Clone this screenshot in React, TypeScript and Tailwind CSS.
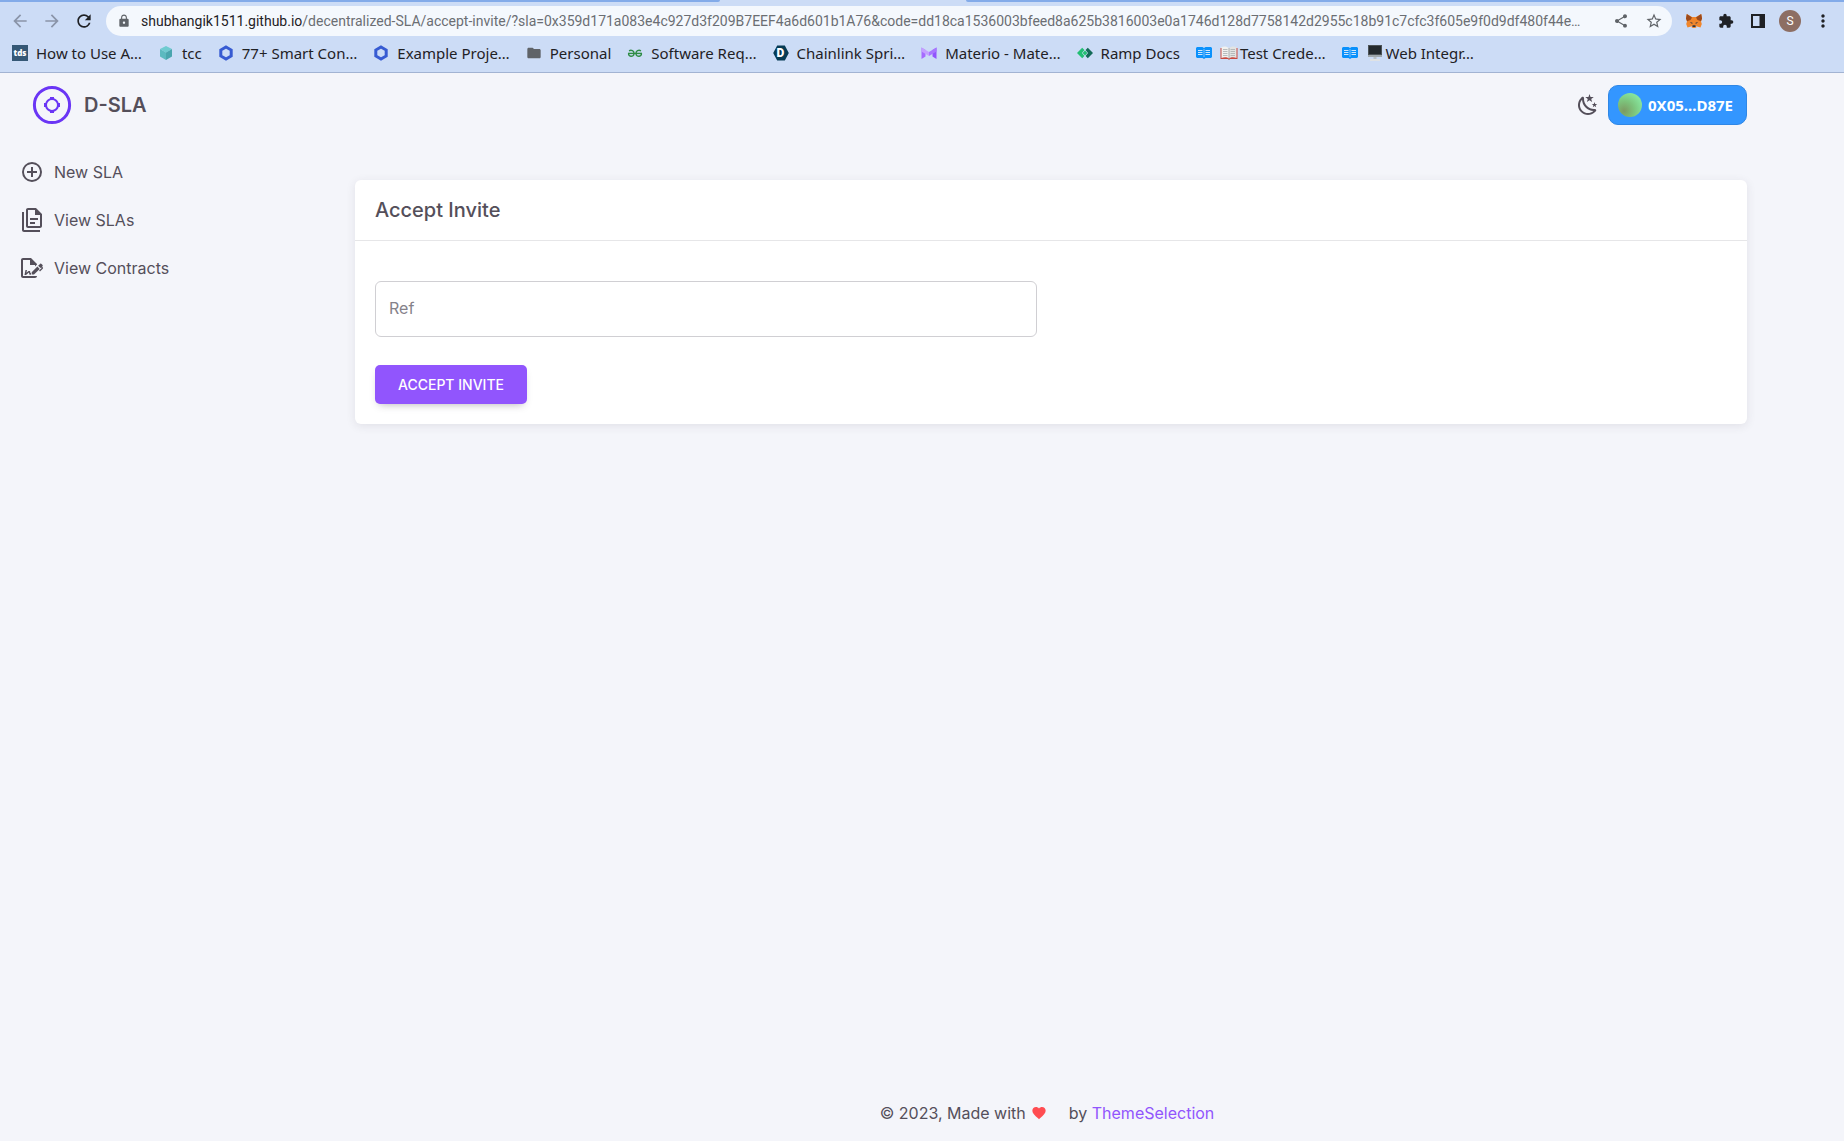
import React from 'react';
import {
  MdArrowBack,
  MdArrowForward,
  MdExtension,
  MdFolder,
  MdLock,
  MdMoreVert,
  MdRefresh,
  MdShare,
  MdStarBorder,
} from 'react-icons/md';

interface IconProps {
  className?: string;
}

const paths = {
  plusCircle:
    'M12,20C7.59,20 4,16.41 4,12C4,7.59 7.59,4 12,4C16.41,4 20,7.59 20,12C20,16.41 16.41,20 12,20M12,2A10,10 0 0,0 2,12A10,10 0 0,0 12,22A10,10 0 0,0 22,12A10,10 0 0,0 12,2M13,7H11V11H7V13H11V17H13V13H17V11H13V7Z',
  documents:
    'M16 0H8C6.9 0 6 .9 6 2V18C6 19.1 6.9 20 8 20H20C21.1 20 22 19.1 22 18V6L16 0M20 18H8V2H15V7H20V18M4 4V22H20V24H4C2.9 24 2 23.1 2 22V4H4M10 10V12H18V10H10M10 14V16H15V14H10Z',
  fileSign:
    'M19.7 12.9L14 18.6H11.7V16.3L17.4 10.6L19.7 12.9M23.1 12.1C23.1 12.4 22.8 12.7 22.5 13L20 15.5L19.1 14.6L21.7 12L21.1 11.4L20.4 12.1L18.1 9.8L20.3 7.7C20.5 7.5 20.9 7.5 21.2 7.7L22.6 9.1C22.8 9.3 22.8 9.7 22.6 10C22.4 10.2 22.2 10.4 22.2 10.6C22.2 10.8 22.4 11 22.6 11.2C22.9 11.5 23.2 11.8 23.1 12.1M3 20V4H10V9H15V10.5L17 8.5V8L11 2H3C1.9 2 1 2.9 1 4V20C1 21.1 1.9 22 3 22H15C16.1 22 17 21.1 17 20H3M11 17.1C10.8 17.1 10.6 17.2 10.5 17.2L10 15H8.5L6.4 16.7L7 14H5.5L4.5 19H6L8.9 16.4L9.5 18.7H10.5L11 18.6V17.1Z',
  night:
    'M17.75,4.09L15.22,6.03L16.13,9.09L13.5,7.28L10.87,9.09L11.78,6.03L9.25,4.09L12.44,4L13.5,1L14.56,4L17.75,4.09M21.25,11L19.61,12.25L20.2,14.23L18.5,13.06L16.8,14.23L17.39,12.25L15.75,11L17.81,10.95L18.5,9L19.19,10.95L21.25,11M18.97,15.95C19.8,15.87 20.69,17.05 20.16,17.8C19.84,18.25 19.5,18.67 19.08,19.07C15.17,23 8.84,23 4.94,19.07C1.03,15.17 1.03,8.83 4.94,4.93C5.34,4.53 5.76,4.17 6.21,3.85C6.96,3.32 8.14,4.21 8.06,5.04C7.79,7.9 8.75,10.87 10.95,13.06C13.14,15.26 16.1,16.22 18.97,15.95M17.33,17.97C14.5,17.81 11.7,16.64 9.53,14.5C7.36,12.31 6.2,9.5 6.04,6.68C3.23,9.82 3.34,14.64 6.35,17.66C9.37,20.67 14.19,20.78 17.33,17.97Z',
  heart:
    'M12,21.35L10.55,20.03C5.4,15.36 2,12.27 2,8.5C2,5.41 4.42,3 7.5,3C9.24,3 10.91,3.81 12,5.08C13.09,3.81 14.76,3 16.5,3C19.58,3 22,5.41 22,8.5C22,12.27 18.6,15.36 13.45,20.03L12,21.35Z',
};

const PathIcon: React.FC<{ d: string; className?: string }> = ({ d, className }) => (
  <svg viewBox="0 0 24 24" fill="currentColor" aria-hidden="true" className={className}>
    <path d={d} />
  </svg>
);

const TdsIcon = () => (
  <span className="flex h-4 w-4 items-center justify-center bg-[#355876] font-['Open_Sans',sans-serif] text-[8px] leading-none font-extrabold text-white">
    tds
  </span>
);

const CubeIcon = () => (
  <svg viewBox="0 0 16 16" className="h-4 w-4">
    <path d="M8 1L14 4L8 7.5L2 4Z" fill="#6fcbd0" />
    <path d="M2 4L8 7.5V15L2 11.5Z" fill="#5cb9c0" />
    <path d="M14 4L8 7.5V15L14 11.5Z" fill="#4aa5ae" />
  </svg>
);

const HexIcon = () => (
  <svg viewBox="0 0 16 16" className="h-4 w-4">
    <path d="M8 2L13.2 5V11L8 14L2.8 11V5Z" fill="none" stroke="#375bd2" strokeWidth="3" />
  </svg>
);

const GeeksIcon = () => (
  <svg viewBox="0 0 16 16" fill="none" stroke="#2f8d46" strokeWidth="1.4" className="h-4 w-4">
    <path d="M1 8.4H15" />
    <path d="M2 5.8C4.5 4.6 7 5.8 7 8.4C7 10.6 5.4 11.4 3.8 11.2C2.2 11 1.5 9.8 1.6 8.4" />
    <path d="M14 5.8C11.5 4.6 9 5.8 9 8.4C9 10.6 10.6 11.4 12.2 11.2C13.8 11 14.5 9.8 14.4 8.4" />
  </svg>
);

const DIcon = () => (
  <span className="relative flex h-4 w-4 items-center justify-center">
    <svg viewBox="0 0 16 16" className="absolute h-4 w-4">
      <path d="M4.2 0.5H11.8L15.8 8L11.8 15.5H4.2L0.2 8Z" fill="#063b54" />
    </svg>
    <span className="relative font-['Roboto',sans-serif] text-xs leading-none font-black text-white">D</span>
  </span>
);

const MaterioIcon = () => (
  <svg viewBox="0 0 16 16" className="h-4 w-4">
    <path d="M0.5 2.5L4.5 5V11.5L0.5 14Z" fill="#a66bff" />
    <path d="M15.5 2.5L11.5 5V11.5L15.5 14Z" fill="#9155fd" />
    <path d="M0.5 2.5L8 7V11L0.5 6.5Z" fill="#c4a0ff" />
    <path d="M15.5 2.5L8 7V11L15.5 6.5Z" fill="#a877ff" />
  </svg>
);

const RampIcon = () => (
  <svg viewBox="0 0 16 16" className="h-4 w-4">
    <path d="M5.2 2.8L7.4 5L5 8L7.4 11L5.2 13.2L0 8Z" fill="#22bf73" />
    <path d="M10.8 2.8L8.6 5L11 8L8.6 11L10.8 13.2L16 8Z" fill="#146b58" />
    <path d="M8 5.4L10.4 8L8 10.6L5.6 8Z" fill="#22bf73" />
  </svg>
);

const DocsIcon = () => (
  <svg viewBox="0 0 16 16" className="h-4 w-4">
    <path d="M1 2H6.5L8 3L9.5 2H15L16 3V12L15 13H9.5L8 14L6.5 13H1L0 12V3Z" fill="#0a91fc" />
    <path d="M2 5.5H6.5M2 7.5H6.5M2 9.5H6.5M9.5 5.5H14M9.5 7.5H14M9.5 9.5H14" stroke="#cfe6fb" strokeWidth="1" />
    <path d="M8 4V12" stroke="#cfe6fb" strokeWidth="0.6" />
  </svg>
);

const OpenBookIcon: React.FC<IconProps> = ({ className }) => (
  <svg viewBox="0 0 18 16" className={className}>
    <path d="M0.5 3H17.5V14H10L9 15L8 14H0.5Z" fill="#c8493f" />
    <path d="M1.5 2C4.5 1 7 1.5 9 3V13.5C7 12 4 12 1.5 13Z" fill="#f1f1ef" />
    <path d="M16.5 2C13.5 1 11 1.5 9 3V13.5C11 12 14 12 16.5 13Z" fill="#e3e4e3" />
    <path
      d="M3 4.5H7.5M3 6.5H7.5M3 8.5H7.5M3 10.5H7.5M10.5 4.5H15M10.5 6.5H15M10.5 8.5H15M10.5 10.5H15"
      stroke="#a9adb0"
      strokeWidth="0.8"
    />
    <path d="M9 3V13.5" stroke="#8f9497" strokeWidth="0.7" />
  </svg>
);

const DesktopIcon: React.FC<IconProps> = ({ className }) => (
  <svg viewBox="0 0 18 16" className={className}>
    <path d="M2 0H16V11H2Z" fill="#4c5357" />
    <path d="M3 1H15V9H3Z" fill="#23292d" />
    <path d="M2 10H16V12H2Z" fill="#9fa7ab" />
    <path d="M7.5 12H10.5V14H7.5Z" fill="#b9c0c4" />
    <path d="M4 14H14V16H4Z" fill="#dfe2e4" />
  </svg>
);

const FoxIcon = () => (
  <svg viewBox="0 0 16 14" className="h-4 w-4">
    <path
      d="M0.8 0L6 3H10L15.2 0L16 4.5L15 7.5L15.8 10L14.5 13.5L11 12.5L9.5 14H6.5L5 12.5L1.5 13.5L0.2 10L1 7.5L0 4.5Z"
      fill="#f0862b"
    />
    <path d="M0.8 0L6 3.5L4.5 6L1 7.2L0 4.5Z" fill="#9c4a1c" />
    <path d="M15.2 0L10 3.5L11.5 6L15 7.2L16 4.5Z" fill="#9c4a1c" />
    <path d="M3.8 8L6.5 8.7L6.2 10Z" fill="#2b3547" />
    <path d="M12.2 8L9.5 8.7L9.8 10Z" fill="#2b3547" />
    <path d="M6.5 11.2H9.5L9.8 13H6.2Z" fill="#33363f" />
    <path d="M5 12.5L6.2 11.5V14ZM11 12.5L9.8 11.5V14Z" fill="#d9c3b4" />
  </svg>
);

const SidePanelIcon = () => (
  <svg viewBox="0 0 14 14" className="h-3.5 w-3.5">
    <path d="M0 0H14V14H0Z" fill="#1f2125" />
    <path d="M2 2H8.5V12H2Z" fill="#ccdcf6" />
  </svg>
);

const LogoIcon: React.FC<IconProps> = ({ className }) => (
  <svg viewBox="0 0 40 40" fill="none" stroke="#6a35f5" className={className}>
    <circle cx="20" cy="20" r="17.6" strokeWidth="3" />
    <circle cx="20" cy="20" r="6" strokeWidth="2" />
    <path d="M18 13.5H22M18 26.5H22M13.5 18V22M26.5 18V22" strokeWidth="3" />
  </svg>
);

const bookmarks = [
  { icon: <TdsIcon />, label: 'How to Use A…' },
  { icon: <CubeIcon />, label: 'tcc' },
  { icon: <HexIcon />, label: '77+ Smart Con…' },
  { icon: <HexIcon />, label: 'Example Proje…' },
  { icon: <MdFolder className="h-[18px] w-[18px] text-[#5f6368]" />, label: 'Personal' },
  { icon: <GeeksIcon />, label: 'Software Req…' },
  { icon: <DIcon />, label: 'Chainlink Spri…' },
  { icon: <MaterioIcon />, label: 'Materio - Mate…' },
  { icon: <RampIcon />, label: 'Ramp Docs' },
  { icon: <DocsIcon />, label: 'Test Crede…', emoji: <OpenBookIcon className="h-4 w-[18px]" /> },
  { icon: <DocsIcon />, label: 'Web Integr…', emoji: <DesktopIcon className="h-4 w-[18px]" /> },
];

const navItems = [
  { icon: paths.plusCircle, label: 'New SLA' },
  { icon: paths.documents, label: 'View SLAs' },
  { icon: paths.fileSign, label: 'View Contracts' },
];

const BrowserBar = () => (
  <div className="border-b border-[#a2b3d2] bg-[#ccdcf6] font-['Noto_Sans',sans-serif] text-[#1f2125]">
    <div className="flex h-0.5">
      <div className="w-[720px] rounded-br bg-[#83abe9]" />
      <div className="w-[246px]" />
      <div className="flex-1 rounded-bl bg-[#83abe9]" />
    </div>
    <div className="flex items-center pt-1">
      <div className="flex w-[106px] items-center gap-3 pl-[10px]">
        <button aria-label="Back" className="text-[#8a94a8]">
          <MdArrowBack className="h-5 w-5" />
        </button>
        <button aria-label="Forward" className="text-[#8a94a8]">
          <MdArrowForward className="h-5 w-5" />
        </button>
        <button aria-label="Reload">
          <MdRefresh className="h-5 w-5" />
        </button>
      </div>
      <div className="flex h-[30px] min-w-0 flex-1 items-center rounded-full bg-[#f4f8fd] pr-[9px] pl-[11px] font-['Roboto',sans-serif] text-sm">
        <MdLock className="mr-2 h-3.5 w-3.5 shrink-0 text-[#5f6368]" />
        <label htmlFor="address" className="ml-0.5 shrink-0">
          shubhangik1511.github.io
        </label>
        <input
          id="address"
          defaultValue="/decentralized-SLA/accept-invite/?sla=0x359d171a083e4c927d3f209B7EEF4a6d601b1A76&code=dd18ca1536003bfeed8a625b3816003e0a1746d128d7758142d2955c18b91c7cfc3f605e9f0d9df480f44e…"
          className="min-w-0 flex-1 truncate bg-transparent text-[#6b6e73] outline-none"
        />
        <button aria-label="Share" className="ml-3 text-[#5f6368]">
          <MdShare className="h-4 w-4" />
        </button>
        <button aria-label="Bookmark this page" className="ml-4 text-[#5f6368]">
          <MdStarBorder className="h-[18px] w-[18px]" />
        </button>
      </div>
      <div className="flex items-center pr-[11px] pl-[14px]">
        <button aria-label="Wallet extension">
          <FoxIcon />
        </button>
        <button aria-label="Extensions" className="ml-4">
          <MdExtension className="h-4 w-4" />
        </button>
        <button aria-label="Side panel" className="ml-[17px]">
          <SidePanelIcon />
        </button>
        <button
          aria-label="Profile"
          className="ml-[14px] flex h-[22px] w-[22px] items-center justify-center rounded-full bg-[#8d6e63] font-['Roboto',sans-serif] text-xs text-white"
        >
          S
        </button>
        <button aria-label="Menu" className="ml-3">
          <MdMoreVert className="h-5 w-5" />
        </button>
      </div>
    </div>
    <nav className="flex h-9 items-center gap-4 overflow-hidden px-3 pb-0.5 text-[15px]">
      {bookmarks.map((item, i) => (
        <a key={i} href="#" className="flex shrink-0 items-center gap-2">
          <span className="flex w-4 justify-center">{item.icon}</span>
          <span className="flex items-center gap-0.5 whitespace-nowrap">
            {item.emoji}
            {item.label}
          </span>
        </a>
      ))}
    </nav>
  </div>
);

const Sidebar = () => (
  <aside className="w-[258px] shrink-0">
    <a href="#" className="flex items-center gap-3 pt-3 pl-8">
      <LogoIcon className="h-10 w-10" />
      <span className="text-xl font-semibold">D-SLA</span>
    </a>
    <nav className="mt-[23px] flex flex-col">
      {navItems.map((item) => (
        <a key={item.label} href="#" className="flex h-12 items-center gap-[10px] pl-5">
          <PathIcon d={item.icon} className="h-6 w-6" />
          {item.label}
        </a>
      ))}
    </nav>
  </aside>
);

const InviteCard = () => (
  <section className="rounded-md bg-white shadow-[0_2px_10px_0_rgba(58,53,65,0.1)]">
    <h1 className="border-b border-[#e6e6e8] px-5 py-4 text-xl leading-7 font-medium">Accept Invite</h1>
    <form className="px-5 pt-10 pb-5" onSubmit={(e) => e.preventDefault()}>
      <div className="grid grid-cols-2 gap-7">
        <input
          aria-label="Ref"
          placeholder="Ref"
          className="h-14 rounded-md border border-[#d0cfd3] px-[13px] pb-0.5 text-base outline-none placeholder:text-[#85828a]"
        />
      </div>
      <button
        type="submit"
        className="mt-7 h-[39px] rounded-[5px] bg-[#9155fd] px-[23px] text-sm font-medium text-white shadow-[0_4px_8px_-4px_rgba(58,53,65,0.4)]"
      >
        ACCEPT INVITE
      </button>
    </form>
  </section>
);

const App: React.FC = () => {
  return (
    <div className="flex min-h-screen flex-col bg-[#f4f5fa] font-['Inter',sans-serif] text-[#544f5a]">
      <BrowserBar />
      <div className="flex flex-1">
        <Sidebar />
        <div className="flex min-w-0 flex-1 justify-center">
          <div className="flex w-full max-w-[1440px] flex-col px-6">
            <header className="flex items-center justify-end gap-2 pt-3">
              <button aria-label="Toggle dark mode">
                <PathIcon d={paths.night} className="h-6 w-6" />
              </button>
              <button className="flex h-10 items-center gap-1.5 rounded-[10px] border border-[#2f87e6] bg-[#3396ff] pr-[13px] pl-[9px] font-['Noto_Sans',sans-serif] text-[15px] font-bold text-white">
                <span className="h-6 w-6 rounded-full bg-[radial-gradient(circle_at_25%_75%,#7d9a62_0%,#7cc47c_40%,#86e39c_75%)]" />
                0X05...D87E
              </button>
            </header>
            <main className="flex-1 pt-[55px]">
              <InviteCard />
            </main>
            <footer className="flex h-14 items-center justify-center pr-2">
              <span>© 2023, Made with</span>
              <PathIcon d={paths.heart} className="ml-[5px] h-4 w-4 text-[#ff4c51]" />
              <span className="ml-[22px]">
                by{' '}
                <a href="#" className="text-[#9155fd]">
                  ThemeSelection
                </a>
              </span>
            </footer>
          </div>
        </div>
      </div>
    </div>
  );
};

export default App;
